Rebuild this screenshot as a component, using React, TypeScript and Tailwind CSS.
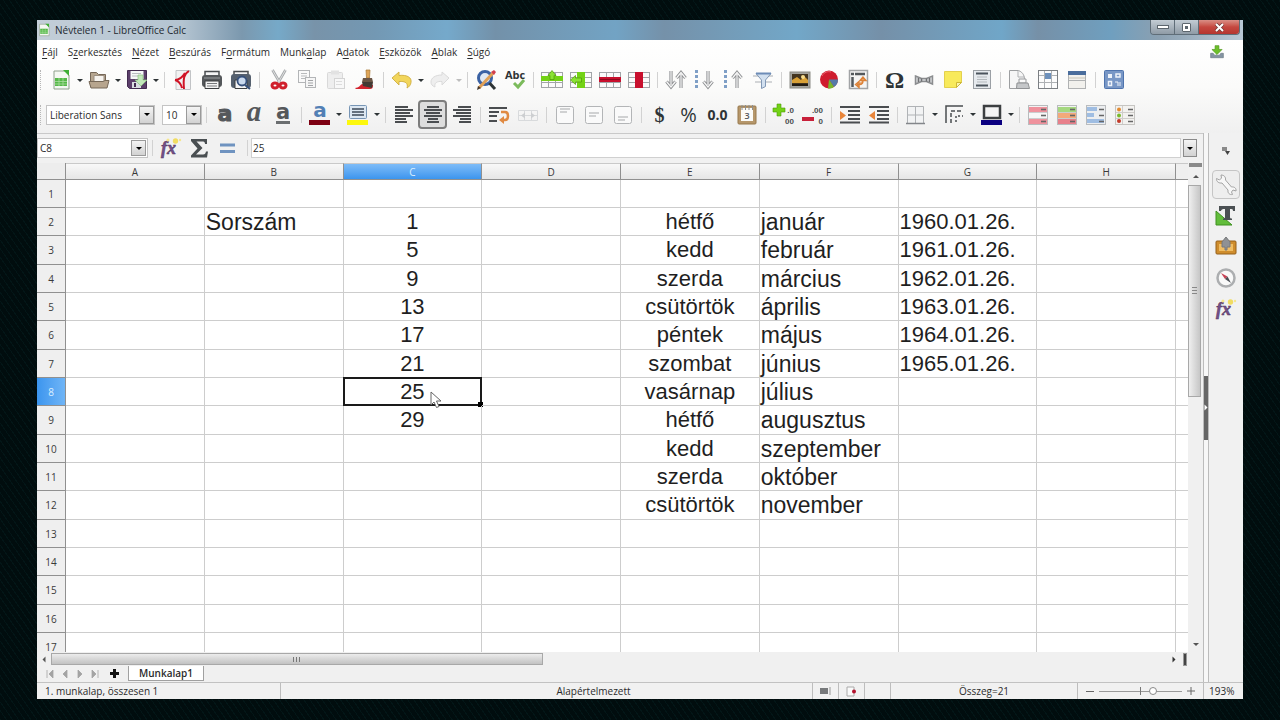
import type { ReactNode } from "react";

type Tool = { name: string; icon: ReactNode; menu?: boolean; active?: boolean; sep?: boolean };

const MENUS: [string, string, string][] = [
  ["", "F", "ájl"],
  ["S", "z", "erkesztés"],
  ["", "N", "ézet"],
  ["", "B", "eszúrás"],
  ["F", "o", "rmátum"],
  ["Munk", "a", "lap"],
  ["A", "d", "atok"],
  ["", "E", "szközök"],
  ["", "A", "blak"],
  ["", "S", "úgó"],
];

const COLUMNS = ["A", "B", "C", "D", "E", "F", "G", "H"];

const COLUMN_STYLE: Record<string, string> = {
  B: "text-[23px]",
  C: "text-[22px] text-center",
  E: "text-[22px] text-center",
  F: "text-[23px]",
  G: "text-[22px]",
};

const CELLS: Record<string, string[]> = {
  B: ["", "Sorszám"],
  C: ["", "1", "5", "9", "13", "17", "21", "25", "29"],
  E: ["", "hétfő", "kedd", "szerda", "csütörtök", "péntek", "szombat", "vasárnap", "hétfő", "kedd", "szerda", "csütörtök"],
  F: ["", "január", "február", "március", "április", "május", "június", "július", "augusztus", "szeptember", "október", "november"],
  G: ["", "1960.01.26.", "1961.01.26.", "1962.01.26.", "1963.01.26.", "1964.01.26.", "1965.01.26."],
};

const ROWS = Array.from({ length: 17 }, (_, i) => i + 1);

function Svg({ children, size = 22 }: { children: ReactNode; size?: number }) {
  return (
    <svg width={size} height={size} viewBox="0 0 22 22" fill="none" aria-hidden="true" className="shrink-0 overflow-visible">
      {children}
    </svg>
  );
}

function SheetDoc({ size }: { size?: number }) {
  return (
    <Svg size={size}>
      <path d="M4 2h11l4 4v14H4z" fill="#f4f8f2" stroke="#8fa08c" />
      <path d="M13 1h6v6z" fill="#3fae35" />
      <rect x="5" y="9" width="12" height="8" fill="#55b848" />
      <path d="M5 12.500h12M5 15h12M9 9v8M13 9v8" stroke="#a9dd9e" strokeWidth="0.800" />
    </Svg>
  );
}

function TableIcon({ kind }: { kind: "rowAdd" | "colAdd" | "rowDel" | "colDel" }) {
  const row = kind === "rowAdd" || kind === "rowDel";
  const color = kind.endsWith("Add") ? "#73d216" : "#c8102e";
  return (
    <Svg>
      <rect x="0.500" y="3.500" width="21" height="15" fill="#fbfbfb" stroke="#a2a5a8" />
      <path d="M1 8.500h20M1 13.500h20M7.500 4v14M14.500 4v14" stroke="#a2a5a8" />
      {row ? <rect x="0" y={kind === "rowAdd" ? 7 : 8} width="22" height="5" fill={color} /> : <rect x="7" y="3" width="8" height="16" fill={color} />}
      {kind === "rowAdd" && <path d="M11 1.500l4 5h-2v4H9v-4H7z" fill="#8ae234" stroke="#4e9a06" strokeWidth="0.700" />}
      {kind === "colAdd" && <path d="M0.500 11l5-4.500v2.500h6v4h-6v2.500z" fill="#8ae234" stroke="#4e9a06" strokeWidth="0.700" />}
      {kind === "rowDel" && <path d="M1 10.500h20" stroke="#8d0a1f" />}
    </Svg>
  );
}

function SortArrow({ x, up }: { x: number; up?: boolean }) {
  const d = up ? "M0 19V5M-4.500 9L0 3.500 4.500 9" : "M0 2v14M-4.500 12.500L0 18l4.500-5.500";
  return (
    <g transform={`translate(${x} 0)`}>
      <path d={d} stroke="#8f9193" strokeWidth="3.200" />
      <path d={d} stroke="#f8f8f8" strokeWidth="1.200" />
    </g>
  );
}

function Dots() {
  return <path d="M2.500 1v19" stroke="#7f9fc6" strokeWidth="3" strokeDasharray="3 2" />;
}

function Lines({ x, widths }: { x: number[]; widths: number[] }) {
  return (
    <>
      {widths.map((w, i) => (
        <rect key={i} x={x[i]} y={2 + i * 3} width={w} height="2" fill="#4a4d50" />
      ))}
    </>
  );
}

function FxIcon() {
  return (
    <Svg>
      <text x="1" y="17" fontFamily="Liberation Serif, serif" fontStyle="italic" fontWeight="700" fontSize="18" fill="#75508a" stroke="#513660" strokeWidth="0.500">
        fx
      </text>
      <circle cx="15.500" cy="4" r="2.700" fill="#f1dc62" />
      <circle cx="8" cy="3" r="1.500" fill="#f5e68d" />
      <circle cx="20" cy="3" r="1.200" fill="#f5e68d" />
    </Svg>
  );
}

function Glyph({ text, className }: { text: string; className: string }) {
  return <span className={`leading-none text-[#2e3436] ${className}`}>{text}</span>;
}

function AlignBox({ y }: { y: number }) {
  return (
    <Svg>
      <rect x="2.500" y="2.500" width="17" height="17" rx="2" fill="#fafafa" stroke="#b3b5b7" />
      <path d={`M6 ${y}h10M6 ${y + 3}h7`} stroke="#a6a8aa" strokeWidth="1.200" />
    </Svg>
  );
}

function DecimalIcon({ add }: { add?: boolean }) {
  return (
    <Svg>
      {add ? <path d="M4 0h4v4h4v4H8v4H4V8H0V4h4z" fill="#73d216" stroke="#4e9a06" strokeWidth="0.600" /> : <rect x="0" y="13" width="12" height="4" fill="#c8203a" />}
      <text x="21" y="9" textAnchor="end" fontFamily="Liberation Sans, sans-serif" fontWeight="700" fontSize="8" fill="#4a4d50">
        {add ? ".0" : ".00"}
      </text>
      <text x="21" y="20" textAnchor="end" fontFamily="Liberation Sans, sans-serif" fontWeight="700" fontSize="8" fill="#4a4d50">
        {add ? "00" : "0"}
      </text>
    </Svg>
  );
}

function IndentIcon({ out }: { out?: boolean }) {
  return (
    <Svg>
      <path d="M1 3h20M9 7h12M9 11h12M9 15h12M1 18.500h20" stroke="#4a4d50" strokeWidth="2" />
      <path d={out ? "M7 7v9l-6-4.500z" : "M1 7v9l6-4.500z"} fill="#e8853a" />
    </Svg>
  );
}

function CondIcon({ colors }: { colors: [string, string, string] }) {
  return (
    <Svg>
      <rect x="1.500" y="1.500" width="19" height="19" fill="#f3f3f3" stroke="#b9bbbd" />
      {colors.map((c, i) => (
        <g key={i}>
          <rect x="2" y={3 + i * 6} width="18" height="5" fill={c} />
          <path d={`M14 ${5.500 + i * 6}h5`} stroke="#666" strokeWidth="1.600" />
        </g>
      ))}
      <path d="M2 8.500h18M2 14.500h18" stroke="#b9bbbd" strokeWidth="0.700" />
    </Svg>
  );
}

const STANDARD: Tool[] = [
  { name: "Új", menu: true, icon: <SheetDoc /> },
  {
    name: "Megnyitás",
    menu: true,
    icon: (
      <Svg>
        <path d="M2.500 18V3.500h6l2 2h7V18z" fill="#b6a690" stroke="#766858" />
        <path d="M6 6.500h10V16H6z" fill="#f6f3ef" stroke="#9c8f80" />
        <path d="M1 12.500h14l2-1h4l-2 7.500H3z" fill="#b7a58e" stroke="#766858" />
      </Svg>
    ),
  },
  {
    name: "Mentés",
    menu: true,
    sep: true,
    icon: (
      <Svg>
        <path d="M1.500 1.500h19v18h-17l-2-2z" fill="#5c3f6b" stroke="#432b50" />
        <rect x="4.500" y="2" width="13" height="8" fill="#f6f7f8" />
        <path d="M6 4.500h9M6 7h6" stroke="#b9bcc0" />
        <rect x="6" y="13" width="9" height="6" fill="#d9dce0" />
        <rect x="8" y="14" width="2" height="4" fill="#432b50" />
        <path d="M12 6h5v5h4l-6 6-6-6h3z" fill="#c2e8ba" stroke="#8cc283" strokeWidth="0.700" />
      </Svg>
    ),
  },
  {
    name: "Exportálás PDF-be",
    icon: (
      <Svg>
        <path d="M4 1.500h14.500v19H4z" fill="#f2f2f2" stroke="#c2c4c6" />
        <path d="M17 2c-5 3-6 7-5 18M3 11c4 0 7-2 10-7M3 11c4 1 6 4 7 8" stroke="#d01426" strokeWidth="2" />
      </Svg>
    ),
  },
  {
    name: "Nyomtatás",
    icon: (
      <Svg>
        <path d="M4 2.500h14V7H4z" fill="#f4f4f4" stroke="#4a4d50" strokeWidth="1.500" />
        <rect x="1" y="6" width="20" height="12" rx="3" fill="#55585b" />
        <path d="M3 9h16" stroke="#9b9ea1" />
        <path d="M4 12h14v7.500H4z" fill="#f4f4f4" stroke="#3c3f41" />
        <path d="M6 14.500h10M6 17h10" stroke="#77797b" />
      </Svg>
    ),
  },
  {
    name: "Nyomtatási kép",
    sep: true,
    icon: (
      <Svg>
        <path d="M4 2.500h14V7H4z" fill="#f4f4f4" stroke="#4a4d50" strokeWidth="1.500" />
        <rect x="1" y="5" width="20" height="14" rx="3" fill="#55606e" />
        <path d="M5 11h12v8.500H5z" fill="#f4f4f4" stroke="#3c3f41" />
        <circle cx="12" cy="12" r="4.500" fill="#c9d9ee" stroke="#36507b" strokeWidth="1.800" />
        <path d="M15 16l5 4" stroke="#36507b" strokeWidth="2" />
      </Svg>
    ),
  },
  {
    name: "Kivágás",
    icon: (
      <Svg>
        <path d="M5.500 1L13 14M18.500 1L11 14" stroke="#a6a9ab" strokeWidth="2.600" />
        <path d="M5.500 1L13 14M18.500 1L11 14" stroke="#ececec" strokeWidth="0.800" />
        <ellipse cx="8" cy="16.500" rx="3" ry="2.600" stroke="#d0202c" strokeWidth="3" />
        <ellipse cx="16" cy="16.500" rx="3" ry="2.600" stroke="#d0202c" strokeWidth="3" />
      </Svg>
    ),
  },
  {
    name: "Másolás",
    icon: (
      <Svg>
        <rect x="2.500" y="1.500" width="11" height="12" fill="#fafafa" stroke="#b3b5b7" />
        <path d="M5 4.500h6M5 7h6M5 9.500h6" stroke="#b9bbbd" />
        <rect x="9.500" y="8.500" width="10" height="10" fill="#f6f6f6" stroke="#b3b5b7" />
        <path d="M12 11.500h5M12 14h5M12 16.500h5" stroke="#a2a4a6" />
      </Svg>
    ),
  },
  {
    name: "Beillesztés",
    icon: (
      <Svg>
        <rect x="2.500" y="3.500" width="15" height="16" rx="1" fill="#eeeeee" stroke="#d9d9d9" />
        <rect x="6" y="1.500" width="8" height="4" fill="#e2e2e2" />
        <rect x="9.500" y="9.500" width="10" height="10" fill="#f8f8f8" stroke="#d4d4d4" />
        <path d="M11 12.500h6M11 15.500h6" stroke="#dcdcdc" />
      </Svg>
    ),
  },
  {
    name: "Formátum másolása",
    sep: true,
    icon: (
      <Svg>
        <path d="M1 19c4 0 5-3 7-4l11 1c0 3-1 4-3 4H2z" fill="#d3242f" />
        <path d="M12 1h4l-.5 8h-3z" fill="#dfa558" stroke="#a87732" strokeWidth="0.700" />
        <path d="M9 9h9l1 4H8z" fill="#6b5646" />
        <path d="M8 13h11l-1 6-9-2z" fill="#433a34" />
      </Svg>
    ),
  },
  {
    name: "Visszavonás",
    menu: true,
    icon: (
      <Svg>
        <path d="M1 9l7-6v3.500c8-1 13 2 12 7-.3 2.500-2 4.500-4 5.500 1.500-5-2-7-8-6.500V16z" fill="#f2d65c" stroke="#cfae3f" strokeWidth="0.900" />
      </Svg>
    ),
  },
  {
    name: "Mégis",
    menu: true,
    sep: true,
    icon: (
      <Svg>
        <path d="M20 9l-7-6v3C6 6 2 9 2 13c0 2 1 4 4 5-1-4 2-6 7-5.500V16z" fill="#eeeeee" stroke="#dadada" />
      </Svg>
    ),
  },
  {
    name: "Keresés és csere",
    icon: (
      <Svg>
        <circle cx="10" cy="9" r="6.500" fill="#dfe8f4" stroke="#3b62a4" strokeWidth="3" />
        <path d="M14.500 14l5.500 6" stroke="#2e3436" strokeWidth="3" />
        <path d="M4 19L18 4" stroke="#e0a056" strokeWidth="3" />
        <path d="M2 21l1-4 3 2z" fill="#45362a" />
        <path d="M16 3l3-2 2 2-2 3z" fill="#d2404e" />
      </Svg>
    ),
  },
  {
    name: "Helyesírás",
    sep: true,
    icon: (
      <Svg>
        <text x="11" y="10" textAnchor="middle" fontFamily="Open Sans, sans-serif" fontWeight="700" fontSize="11" fill="#2e3436">
          Abc
        </text>
        <path d="M10 14l4 4 6-7" stroke="#7cbb5c" strokeWidth="3" />
      </Svg>
    ),
  },
  { name: "Sor beszúrása", icon: <TableIcon kind="rowAdd" /> },
  { name: "Oszlop beszúrása", icon: <TableIcon kind="colAdd" /> },
  { name: "Sor törlése", icon: <TableIcon kind="rowDel" /> },
  { name: "Oszlop törlése", sep: true, icon: <TableIcon kind="colDel" /> },
  { name: "Rendezés", icon: <Svg><SortArrow x={6} /><SortArrow x={16} up /></Svg> },
  { name: "Növekvő rendezés", icon: <Svg><Dots /><SortArrow x={14} /></Svg> },
  { name: "Csökkenő rendezés", icon: <Svg><Dots /><SortArrow x={14} up /></Svg> },
  {
    name: "Automatikus szűrő",
    sep: true,
    icon: (
      <Svg>
        <path d="M1 7h20M3 13h17" stroke="#d3d5d7" strokeWidth="2" />
        <path d="M4 4.500h15l-5.500 6.500v6.500l-4 2V11z" fill="#d2e0ef" stroke="#8298b5" />
        <path d="M4 4.500h15" stroke="#6d8cb7" strokeWidth="2" />
      </Svg>
    ),
  },
  {
    name: "Kép",
    icon: (
      <Svg>
        <rect x="1" y="3" width="20" height="16" fill="#a3a39d" stroke="#8c8c85" />
        <rect x="3" y="5" width="16" height="12" fill="#43351f" />
        <path d="M3 11l5-3 4 3 3-4 4 4v3H3z" fill="#d9a136" />
        <circle cx="14" cy="8" r="2" fill="#f6dc8d" />
        <path d="M3 15h16v2H3z" fill="#221c12" />
      </Svg>
    ),
  },
  {
    name: "Diagram",
    icon: (
      <Svg>
        <circle cx="11" cy="10.500" r="9" fill="#cf1c2e" />
        <path d="M11 10.500h9a9 9 0 0 1-4 7.500z" fill="#567aa9" />
        <path d="M11 10.500l5 7.500a9 9 0 0 1-6 1.500z" fill="#79b92c" />
        <path d="M4 7c2-4 6-5 9-4" stroke="#ea6470" />
      </Svg>
    ),
  },
  {
    name: "Kimutatás",
    sep: true,
    icon: (
      <Svg>
        <rect x="2.500" y="1.500" width="18" height="18" fill="#f5f5f5" stroke="#a2a4a6" strokeWidth="1.500" />
        <path d="M8 5h10M5.500 8v10" stroke="#53585c" strokeWidth="2.500" />
        <path d="M4 5h3" stroke="#53585c" strokeWidth="2.500" />
        <path d="M10 15.500h2.500c3 0 3.500-2 3.500-4M16 8l-3 3.500h6zM8.500 15.500l3.500-3v6z" stroke="#dc8238" strokeWidth="1.400" fill="#e9a873" />
      </Svg>
    ),
  },
  { name: "Különleges karakter", icon: <Glyph text="Ω" className="font-['Liberation_Serif',serif] text-[24px] font-bold" /> },
  {
    name: "Hiperhivatkozás",
    icon: (
      <Svg>
        <path d="M2.500 7l6 2.500h5l6-2.500v8l-6-2.500h-5L2.500 15z" fill="#d5d7d9" stroke="#8b8d8f" strokeWidth="1.500" />
        <path d="M5.500 9v4M8.500 9.500v3M13.500 9.500v3M16.500 9v4" stroke="#6f7173" strokeWidth="1.500" />
      </Svg>
    ),
  },
  {
    name: "Megjegyzés",
    icon: (
      <Svg>
        <path d="M2.500 2.500h17v11l-5 5h-12z" fill="#f8ea5b" stroke="#e3d04e" />
        <path d="M14.500 18.500v-5h5z" fill="#fbf6ac" stroke="#cdb635" />
      </Svg>
    ),
  },
  {
    name: "Élőfej és élőláb",
    sep: true,
    icon: (
      <Svg>
        <rect x="2.500" y="1.500" width="17" height="18" fill="#e6eaee" stroke="#9ba0a5" />
        <path d="M5 4.500h12M5 16.500h12" stroke="#4b545d" strokeWidth="2" />
        <path d="M6 8h10M6 10.500h10M6 13h10" stroke="#b4b9bd" />
      </Svg>
    ),
  },
  {
    name: "Nyomtatási tartomány",
    icon: (
      <Svg>
        <path d="M1.500 1.500h9c5 2 6 6 6 9v9h-15z" fill="#f6f6f6" stroke="#9d9fa1" />
        <path d="M10 2v6h6" stroke="#b0b2b4" />
        <path d="M11 10h7v4h-7z" fill="#fafafa" stroke="#97999b" />
        <path d="M9 14h11l1.500 5.500h-13z" fill="#c5c7c9" stroke="#909294" />
      </Svg>
    ),
  },
  {
    name: "Rögzítés",
    icon: (
      <Svg>
        <rect x="1.500" y="1.500" width="19" height="18" fill="#fcfcfc" stroke="#7b7f83" />
        <path d="M7.500 2v17M14.500 2v17M2 6.500h18M2 13.500h18" stroke="#aeb1b4" />
        <rect x="8" y="4" width="6" height="6" fill="#6e91bc" />
      </Svg>
    ),
  },
  {
    name: "Ablak felosztása",
    sep: true,
    icon: (
      <Svg>
        <rect x="2.500" y="2.500" width="17" height="17" fill="#f2f1ed" stroke="#b0b2b3" />
        <path d="M2 4h18" stroke="#4a6d9c" strokeWidth="4" />
        <path d="M3 8h16v2H3z" fill="#dcdad2" />
        <path d="M2 11.500h18" stroke="#b0b2b3" />
      </Svg>
    ),
  },
  {
    name: "Rajzfunkciók",
    icon: (
      <Svg>
        <rect x="1.500" y="1.500" width="19" height="18" rx="1" fill="#7897c6" stroke="#4f74ad" />
        <rect x="5" y="5" width="4" height="4" fill="#eef3fa" />
        <rect x="13" y="5" width="4" height="3" stroke="#eef3fa" strokeWidth="1.500" />
        <rect x="5.500" y="12.500" width="3" height="4" stroke="#eef3fa" strokeWidth="1.500" />
        <path d="M12 13h3v4M17 13v4" stroke="#eef3fa" />
      </Svg>
    ),
  },
];

const FORMATTING: Tool[] = [
  {
    name: "Félkövér",
    icon: (
      <Svg>
        <text x="11" y="17" textAnchor="middle" fontFamily="DejaVu Sans, sans-serif" fontWeight="700" fontSize="22" fill="#55585b" stroke="#55585b" strokeWidth="1">
          a
        </text>
      </Svg>
    ),
  },
  {
    name: "Dőlt",
    icon: (
      <Svg>
        <text x="11" y="17" textAnchor="middle" fontFamily="Liberation Serif, serif" fontStyle="italic" fontWeight="700" fontSize="29" fill="#55585b">
          a
        </text>
      </Svg>
    ),
  },
  {
    name: "Aláhúzott",
    sep: true,
    icon: (
      <Svg>
        <text x="11" y="15" textAnchor="middle" fontFamily="DejaVu Sans, sans-serif" fontWeight="700" fontSize="21" fill="#55585b">
          a
        </text>
        <path d="M4 18.500h14" stroke="#6b6e70" strokeWidth="3" />
      </Svg>
    ),
  },
  {
    name: "Betűszín",
    menu: true,
    icon: (
      <Svg>
        <text x="11" y="13" textAnchor="middle" fontFamily="DejaVu Sans, sans-serif" fontWeight="700" fontSize="20" fill="#5280b5">
          a
        </text>
        <rect x="0" y="16" width="21" height="5" fill="#7d0012" />
      </Svg>
    ),
  },
  {
    name: "Kiemelés színe",
    menu: true,
    sep: true,
    icon: (
      <Svg>
        <rect x="2.500" y="1.500" width="17" height="13" rx="1" fill="#dce7f2" stroke="#7795b5" />
        <path d="M5 5h12M5 8h12M5 11h12" stroke="#3c4a58" strokeWidth="1.500" />
        <rect x="0" y="16" width="21" height="5" fill="#fdf80d" />
      </Svg>
    ),
  },
  { name: "Balra igazítás", icon: <Svg><Lines x={[2, 2, 2, 2, 2, 2]} widths={[13, 18, 15, 18, 11, 12]} /></Svg> },
  { name: "Középre igazítás", active: true, icon: <Svg><Lines x={[5, 2, 4, 2, 6, 5]} widths={[12, 18, 14, 18, 10, 12]} /></Svg> },
  { name: "Jobbra igazítás", sep: true, icon: <Svg><Lines x={[7, 2, 5, 2, 9, 8]} widths={[13, 18, 15, 18, 11, 12]} /></Svg> },
  {
    name: "Szövegtördelés",
    icon: (
      <Svg>
        <path d="M1 4h18M1 8h10M1 12h8M1 17h8" stroke="#4a4d50" strokeWidth="2" />
        <path d="M13 8h4c2 0 3 1.500 3 4 0 3-1.500 4-3 4h-2" stroke="#e08a42" strokeWidth="2.500" />
        <path d="M16 12v8l-5-4z" fill="#e08a42" />
      </Svg>
    ),
  },
  {
    name: "Cellák egyesítése",
    sep: true,
    icon: (
      <Svg>
        <path d="M1.500 6.500h19v10h-19zM1 11.500h20M7.500 6v10M14.500 6v10" stroke="#d8dadc" />
        <path d="M4 11.500l4-3v6zM18 11.500l-4-3v6z" fill="#cdcfd1" />
      </Svg>
    ),
  },
  { name: "Igazítás felülre", icon: <AlignBox y={5} /> },
  { name: "Függőlegesen középre", icon: <AlignBox y={9} /> },
  { name: "Igazítás alulra", sep: true, icon: <AlignBox y={13} /> },
  { name: "Pénznem", icon: <Glyph text="$" className="font-['Liberation_Serif',serif] text-xl font-bold" /> },
  { name: "Százalék", icon: <Glyph text="%" className="font-['Open_Sans',sans-serif] text-xl" /> },
  { name: "Szám", icon: <Glyph text="0.0" className="font-['Open_Sans',sans-serif] text-sm font-bold" /> },
  {
    name: "Dátum",
    sep: true,
    icon: (
      <Svg>
        <rect x="2" y="2" width="18" height="18" rx="1" fill="#b6976b" stroke="#97794d" />
        <rect x="5" y="4" width="12" height="13" fill="#fbfbf8" />
        <path d="M6 1v5M9.500 1v5M13 1v5M16.500 1v5" stroke="#8c8e90" />
        <text x="11" y="15" textAnchor="middle" fontFamily="Open Sans, sans-serif" fontWeight="600" fontSize="9" fill="#55585b">
          3
        </text>
      </Svg>
    ),
  },
  { name: "Tizedesjegy hozzáadása", icon: <DecimalIcon add /> },
  { name: "Tizedesjegy törlése", sep: true, icon: <DecimalIcon /> },
  { name: "Behúzás növelése", icon: <IndentIcon /> },
  { name: "Behúzás csökkentése", sep: true, icon: <IndentIcon out /> },
  {
    name: "Szegélyek",
    menu: true,
    icon: (
      <Svg>
        <path d="M2.500 2.500h16v17h-16zM10.500 2v18M2 11h17" fill="#f2f3f4" stroke="#b0b3b6" />
        <path d="M1 19.500h19" stroke="#83868a" strokeWidth="1.500" />
      </Svg>
    ),
  },
  {
    name: "Szegélystílus",
    menu: true,
    icon: (
      <Svg>
        <path d="M3 19V2h17" stroke="#4a4d50" strokeWidth="1.500" />
        <path d="M8 19V7h12" stroke="#4a4d50" strokeWidth="1.500" strokeDasharray="4 2" />
        <path d="M13 18v-6h7" stroke="#4a4d50" strokeWidth="1.500" strokeDasharray="2 2" />
      </Svg>
    ),
  },
  {
    name: "Szegélyszín",
    menu: true,
    sep: true,
    icon: (
      <Svg>
        <rect x="3" y="2" width="16" height="12" fill="#f4f4f4" stroke="#3c3f41" strokeWidth="2.500" />
        <rect x="0" y="16" width="21" height="5" fill="#0b0080" />
      </Svg>
    ),
  },
  { name: "Feltételes formázás", icon: <CondIcon colors={["#ef929d", "#f7f7f7", "#ef929d"]} /> },
  { name: "Színskála", icon: <CondIcon colors={["#a5d880", "#f3a97a", "#e8808b"]} /> },
  {
    name: "Adatsáv",
    icon: (
      <Svg>
        <rect x="1.500" y="1.500" width="19" height="19" fill="#eceef0" stroke="#b9bbbd" />
        <rect x="2" y="3" width="10" height="4" fill="#9fbde2" />
        <rect x="2" y="9" width="7" height="4" fill="#9fbde2" />
        <rect x="2" y="15" width="17" height="4" fill="#9fbde2" />
        <path d="M14 5.500h5M14 11.500h5M14 17.500h5" stroke="#666" strokeWidth="1.600" />
      </Svg>
    ),
  },
  {
    name: "Ikonkészlet",
    icon: (
      <Svg>
        <rect x="1.500" y="1.500" width="19" height="19" fill="#f3f2f0" stroke="#c6c5c2" />
        <circle cx="5" cy="5.500" r="2" fill="#e38b31" />
        <circle cx="5" cy="11.500" r="2" fill="#79b92c" />
        <circle cx="5" cy="17" r="2" fill="#c23a2a" />
        <path d="M8.500 2v18M2 8.500h18M2 14.500h18" stroke="#cfcdca" />
        <path d="M14 5.500h5M14 11.500h5M14 17.500h5" stroke="#666" strokeWidth="1.600" />
      </Svg>
    ),
  },
];

function Caret({ className = "border-t-[#3c3f41]" }: { className?: string }) {
  return <span className={`block size-0 border-x-[3px] border-t-[3px] border-x-transparent ${className}`} />;
}

function Separator() {
  return <span className="flex w-2 shrink-0 justify-center"><span className="h-4 w-px bg-[#d2d2d2]" /></span>;
}

function Grip() {
  return <span className="ml-px mr-[5px] h-5 border-l border-dotted border-[#b7b7b7]" />;
}

function Tools({ items }: { items: Tool[] }) {
  return items.map((t) => (
    <div key={t.name} className="flex items-center shrink-0">
      <button
        type="button"
        aria-label={t.name}
        className={`flex h-[29px] w-[29px] items-center justify-center ${t.active ? "rounded-sm border-2 border-[#7d7d7d] bg-[#dddddd]" : ""}`}
      >
        {t.icon}
      </button>
      {t.menu && (
        <button type="button" aria-label={`${t.name} menü`} className="flex h-5 w-[9px] items-center justify-center">
          <Caret className={t.name === "Mégis" ? "border-t-[#bdbdbd]" : "border-t-[#2e3436]"} />
        </button>
      )}
      {t.sep && <Separator />}
    </div>
  ));
}

function Combo({ label, value, className }: { label: string; value: string; className: string }) {
  return (
    <div className={`relative h-5 shrink-0 ${className}`}>
      <select aria-label={label} defaultValue={value} className="block h-5 w-full appearance-none border border-[#c4c4c4] bg-white pl-[3px] text-[10px] leading-4">
        <option>{value}</option>
      </select>
      <span className="pointer-events-none absolute inset-y-px right-px flex w-[15px] items-center justify-center border border-[#9a9a9a] bg-gradient-to-b from-[#f4f4f4] to-[#d2d2d2]">
        <Caret className="border-t-black" />
      </span>
    </div>
  );
}

function TitleBar() {
  return (
    <header className="flex h-5 shrink-0 items-start bg-[linear-gradient(to_right,#c3ced8_0%,#b4c4d1_12%,#7b98ae_17%,#76a9c8_20%,#7893a9_23%,#7398b3_28%,#75a9cb_34%,#7391a9_38%,#72a3c4_48%,#7591a9_52%,#72a7c8_63%,#7590a8_70%,#70a6c8_80%,#7690a7_83%,#6f9fbf_89%,#8ba0b1_93%,#b9c8d5_100%)]">
      <div className="flex flex-1 items-center gap-1 self-center">
        <SheetDoc size={14} />
        <h1 className="text-[10px] font-medium leading-4 text-[#1d2930]">Névtelen 1 - LibreOffice Calc</h1>
      </div>
      <div className="mr-[3px] flex h-[15px] overflow-hidden rounded-b border border-t-0 border-[#5f6d78]">
        <button type="button" aria-label="Kis méret" className="flex w-6 items-center justify-center border-r border-[#5f6d78] bg-gradient-to-b from-[#c3ccd4] to-[#8f9ba6]">
          <span className="h-[4px] w-3 border border-[#5d666e] bg-white" />
        </button>
        <button type="button" aria-label="Előző méret" className="flex w-6 items-center justify-center border-r border-[#5f6d78] bg-gradient-to-b from-[#c3ccd4] to-[#8f9ba6]">
          <span className="flex size-[9px] items-center justify-center rounded-[1px] border border-[#5d666e] bg-white"><span className="size-[3px] bg-[#5d666e]" /></span>
        </button>
        <button type="button" aria-label="Bezárás" className="flex w-10 items-center justify-center bg-gradient-to-b from-[#d88e86] via-[#c5473f] to-[#b53630]">
          <svg width="11" height="9" viewBox="0 0 11 9" aria-hidden="true">
            <path d="M2 1l7 7M9 1L2 8" stroke="#6e3a38" strokeWidth="3.500" />
            <path d="M2 1l7 7M9 1L2 8" stroke="#fff" strokeWidth="2" />
          </svg>
        </button>
      </div>
    </header>
  );
}

function MenuBar() {
  return (
    <nav className="flex h-[23px] shrink-0 items-center gap-[10px] pl-[5px] pr-[19px]">
      {MENUS.map(([before, key, after]) => (
        <button key={before + key + after} type="button" className="text-[10px] leading-4">
          {before}
          <u className="underline-offset-2">{key}</u>
          {after}
        </button>
      ))}
      <button type="button" aria-label="Frissítés érhető el" className="ml-auto">
        <Svg size={14}>
          <path d="M1 13h4l2 3h8l2-3h4v7H1z" fill="#8494a3" stroke="#66737e" />
          <path d="M8 1h6v6h5l-8 8-8-8h5z" fill="#6cbf2b" stroke="#4b9116" />
        </Svg>
      </button>
    </nav>
  );
}

function FormulaBar() {
  return (
    <div className="flex h-[30px] shrink-0 items-center border-t border-[#c9c9c9] bg-[#f1f1f1] pb-px pr-[6px]">
      <div className="flex h-5 w-[111px] shrink-0 border border-[#c4c4c4] bg-white p-px">
        <input aria-label="Név mező" defaultValue="C8" className="w-0 flex-1 pl-px text-[10px]" />
        <button type="button" aria-label="Nevek" className="flex w-[15px] items-center justify-center border border-[#9a9a9a] bg-gradient-to-b from-[#f4f4f4] to-[#d2d2d2]">
          <Caret className="border-t-black" />
        </button>
      </div>
      <Separator />
      <button type="button" aria-label="Függvénytündér" className="flex w-[29px] justify-center"><FxIcon /></button>
      <button type="button" aria-label="Összeg" className="flex w-[29px] justify-center">
        <Svg>
          <path d="M2 2h16v5h-2c0-2-1-2.500-3-2.500H7.500l6 6.500-6.500 6.500h7c2 0 2.500-1 3-3h2l-1 6H2v-2l6.500-7L2 4z" fill="#4a4f52" />
        </Svg>
      </button>
      <button type="button" aria-label="Függvény" className="flex w-[29px] justify-center">
        <Svg><path d="M2 8h15M2 14.500h15" stroke="#6f93c0" strokeWidth="3" /></Svg>
      </button>
      <Separator />
      <input aria-label="Beviteli sor" defaultValue="25" className="h-5 min-w-0 flex-1 border border-[#d0d0d0] bg-white pl-px text-[10px]" />
      <button type="button" aria-label="Beviteli sor kibontása" className="ml-[2px] flex h-[18px] w-[14px] items-center justify-center border border-[#8a8a8a] bg-gradient-to-b from-[#f4f4f4] to-[#d2d2d2]">
        <Caret className="border-t-black" />
      </button>
    </div>
  );
}

function Sheet() {
  return (
    <div className="min-w-0 flex-1 overflow-hidden bg-white">
      <table className="w-full table-fixed border-separate border-spacing-0">
        <colgroup>
          <col className="w-[29px]" />
          {COLUMNS.map((c) => <col key={c} />)}
          <col className="w-3" />
        </colgroup>
        <thead>
          <tr className="h-[17px] text-[10px] leading-[14px] text-[#3a3a3a]">
            <th className="border-b border-r border-[#909090] bg-[#ededed] p-0" />
            {COLUMNS.map((c) => (
              <th
                key={c}
                className={`border-b border-r border-t border-[#909090] border-t-[#c9c9c9] p-0 font-medium ${c === "C" ? "bg-gradient-to-b from-[#7dbcf8] to-[#3b95ee] text-[#dcefff]" : "bg-gradient-to-b from-[#f8f8f8] to-[#e6e6e6]"}`}
              >
                {c}
              </th>
            ))}
            <th className="border-b border-t border-[#909090] border-t-[#c9c9c9] bg-[#efefef] p-0" />
          </tr>
        </thead>
        <tbody>
          {ROWS.map((r) => (
            <tr key={r} className="h-7 nth-[3n]:h-[29px]">
              <th
                className={`border-b border-r border-[#909090] p-0 text-[10px] font-medium leading-4 ${r === 8 ? "bg-gradient-to-r from-[#3b95ee] to-[#6fb5f7] text-[#dcefff]" : "bg-[#efefef] text-[#3a3a3a]"}`}
              >
                {r}
              </th>
              {COLUMNS.map((c) => (
                <td
                  key={c}
                  className={`relative whitespace-nowrap border-b border-r border-[#cdcdcd] px-px py-0 leading-6 text-[#1f1f1f] ${COLUMN_STYLE[c] ?? ""}`}
                >
                  {CELLS[c]?.[r - 1]}
                  {c === "C" && r === 8 && <Selection />}
                </td>
              ))}
              <td className="border-b border-[#cdcdcd] p-0" />
            </tr>
          ))}
        </tbody>
      </table>
    </div>
  );
}

// cell frame, fill handle and the mouse pointer resting on the cell
function Selection() {
  return (
    <span className="pointer-events-none absolute -inset-px border-2 border-[#1a1a1a]">
      <span className="absolute -bottom-[3px] -right-[3px] size-[5px] bg-black" />
      <svg className="absolute left-[85px] top-3" width="12" height="18" viewBox="0 0 12 18" aria-hidden="true">
        <path d="M1 1v13l3-3 2.500 5.500 2.500-1L6.500 10H11z" fill="#fff" stroke="#666" />
      </svg>
    </span>
  );
}

function VerticalScroll() {
  return (
    <div className="flex w-[15px] shrink-0 flex-col items-center bg-[#f0f0f0]">
      <span className="h-1 w-[13px] shrink-0 bg-[#8a8a8a]" />
      <button type="button" aria-label="Görgetés fel" className="flex h-[18px] shrink-0 items-center"><Caret className="rotate-180 border-t-[#555]" /></button>
      <div className="w-full flex-1">
        <div className="flex h-[47%] w-[13px] items-center justify-center border border-[#a8a8a8] bg-gradient-to-r from-[#efefef] to-[#c6c6c6]">
          <span className="h-[7px] w-[5px] border-y border-[#888]"><span className="mt-[2px] block h-px bg-[#888]" /></span>
        </div>
      </div>
      <button type="button" aria-label="Görgetés le" className="flex h-4 shrink-0 items-center"><Caret className="border-t-[#555]" /></button>
    </div>
  );
}

function HorizontalScroll() {
  return (
    <div className="flex h-[14px] shrink-0 items-center bg-[#f0f0f0] pr-4">
      <button type="button" aria-label="Görgetés balra" className="flex w-[14px] justify-center"><Caret className="rotate-90 border-t-[#555]" /></button>
      <div className="h-3 flex-1">
        <div className="flex h-full w-[44%] items-center justify-center border border-[#a8a8a8] bg-gradient-to-b from-[#ececec] to-[#c2c2c2]">
          <span className="h-[5px] w-[7px] border-x border-[#777]"><span className="mx-auto block h-full w-px bg-[#777]" /></span>
        </div>
      </div>
      <button type="button" aria-label="Görgetés jobbra" className="flex w-[10px] justify-center"><Caret className="-rotate-90 border-t-[#333]" /></button>
      <span className="ml-1 h-[13px] w-1 border border-[#999] bg-[#444]" />
    </div>
  );
}

function SheetTabs() {
  const nav: [string, string][] = [
    ["Első munkalap", "M1 0v8M7 0L3 4l4 4z"],
    ["Előző munkalap", "M6 0L2 4l4 4z"],
    ["Következő munkalap", "M2 0l4 4-4 4z"],
    ["Utolsó munkalap", "M7 0v8M1 0l4 4-4 4z"],
  ];
  return (
    <div className="flex h-4 shrink-0 items-start bg-[#f0f0f0] pl-[5px]">
      {nav.map(([label, d]) => (
        <button key={label} type="button" aria-label={label} className="flex h-[15px] w-[15px] items-center justify-center">
          <svg width="8" height="8" viewBox="0 0 8 8" aria-hidden="true"><path d={d} fill="#a3a3a3" stroke="#a3a3a3" strokeWidth="0.800" /></svg>
        </button>
      ))}
      <button type="button" aria-label="Munkalap hozzáadása" className="ml-1 mr-[6px] flex h-[15px] w-4 items-center justify-center">
        <svg width="9" height="9" viewBox="0 0 9 9" aria-hidden="true"><path d="M4.500 0v9M0 4.500h9" stroke="#111" strokeWidth="3" /></svg>
      </button>
      <button type="button" className="h-[15px] border border-t-0 border-[#a0a0a0] bg-white px-[10px] text-[10px] font-semibold leading-[14px]">Munkalap1</button>
    </div>
  );
}

function Sidebar() {
  const panels: { name: string; icon: ReactNode; on?: boolean }[] = [
    {
      name: "Tulajdonságok",
      on: true,
      icon: (
        <Svg>
          <path d="M6 1c3 0 5 2 4.500 5l6 7c3-.5 5 1.500 4.500 4l-3-1-1.500 2 1 2.500c-3 .5-5-1.500-4.500-4.500l-6-7C4 9.500 1 7.500 1.500 4.500l3 1.500L6.500 4z" fill="#f7f7f7" stroke="#a3a3a3" />
        </Svg>
      ),
    },
    {
      name: "Stílusok",
      icon: (
        <Svg>
          <path d="M1 6v14h16z" fill="#62bd3b" stroke="#3f9120" />
          <path d="M4 1h16v5h-2c0-2-1-2-3-2v8c0 1 .5 1.500 2 1.500V15H8v-1.500c1.500 0 2-.5 2-1.500V4C7 4 6.500 4.500 6 6H4z" fill="#4b5053" />
        </Svg>
      ),
    },
    {
      name: "Galéria",
      icon: (
        <Svg>
          <rect x="1" y="5" width="20" height="13" rx="1" fill="#cf8d2d" stroke="#96601a" />
          <path d="M4 8h14v7H4z" fill="#f0bd63" />
          <path d="M11 1l4 5v5h-3v3h-2v-3H7V6z" fill="#8f9194" stroke="#77797c" />
        </Svg>
      ),
    },
    {
      name: "Navigátor",
      icon: (
        <Svg>
          <circle cx="11" cy="11" r="8.500" fill="#f9f9f9" stroke="#acaeb0" strokeWidth="2.500" />
          <path d="M6 6l6.500 3.500L10 12z" fill="#c74356" />
          <path d="M16 16l-6-4 2.500-2.500z" fill="#4b4f55" />
        </Svg>
      ),
    },
    { name: "Függvények", icon: <FxIcon /> },
  ];
  return (
    <aside className="flex w-[35px] shrink-0 flex-col items-center gap-[2px] border-l border-[#bcbcbc] bg-[#f1f1f1]">
      <button type="button" aria-label="Oldalsáv beállításai" className="flex h-[35px] w-full items-center justify-center">
        <svg width="10" height="10" viewBox="0 0 10 10" aria-hidden="true"><path d="M1 1h5v4H1z" fill="#8a8a8a" /><path d="M4 5h5L6.500 9z" fill="#444" /></svg>
      </button>
      {panels.map((p) => (
        <button key={p.name} type="button" aria-label={p.name} className={`flex h-[29px] w-7 items-center justify-center ${p.on ? "rounded-sm border border-[#c5c5c5] bg-[#eeeeee]" : ""}`}>
          {p.icon}
        </button>
      ))}
    </aside>
  );
}

function StatusBar() {
  return (
    <footer className="flex h-[17px] shrink-0 items-stretch border-t border-[#c2c2c2] bg-[#f1f1f1] text-[10px] leading-4">
      <span className="w-[244px] border-r border-[#bdbdbd] pl-2">1. munkalap, összesen 1</span>
      <span className="w-[94px]" />
      <span className="flex-1 border-r border-[#bdbdbd] text-center">Alapértelmezett</span>
      <span className="flex w-[26px] items-center justify-center border-r border-[#bdbdbd]">
        <svg width="11" height="8" viewBox="0 0 11 8" aria-hidden="true"><path d="M0 1h8v6H0z" fill="#77797b" /><path d="M10 0v8" stroke="#999" /></svg>
      </span>
      <span className="flex w-[26px] items-center justify-center border-r border-[#bdbdbd]">
        <svg width="11" height="11" viewBox="0 0 11 11" aria-hidden="true"><path d="M1 1h7v9H1z" fill="#fafafa" stroke="#aaa" /><circle cx="8" cy="5.500" r="2" fill="#b3122d" /></svg>
      </span>
      <span className="w-[26px] border-r border-[#bdbdbd]" />
      <span className="w-[187px] border-r border-[#bdbdbd] text-center">Összeg=21</span>
      <span className="flex w-[126px] items-center gap-[5px] border-r border-[#bdbdbd] px-2">
        <button type="button" aria-label="Kicsinyítés" className="flex w-[8px] justify-center"><span className="h-px w-2 bg-[#666]" /></button>
        <input
          type="range"
          aria-label="Nagyítás"
          min={0}
          max={100}
          defaultValue={66}
          className="h-2 min-w-0 flex-1 appearance-none bg-[linear-gradient(#777,#777),linear-gradient(#999,#999)] bg-[size:1px_8px,100%_1px] bg-center bg-no-repeat [&::-webkit-slider-thumb]:size-2 [&::-webkit-slider-thumb]:appearance-none [&::-webkit-slider-thumb]:rounded-full [&::-webkit-slider-thumb]:border [&::-webkit-slider-thumb]:border-[#888] [&::-webkit-slider-thumb]:bg-white"
        />
        <button type="button" aria-label="Nagyítás növelése" className="flex w-2 justify-center">
          <svg width="8" height="8" viewBox="0 0 8 8" aria-hidden="true"><path d="M4 0v8M0 4h8" stroke="#666" /></svg>
        </button>
      </span>
      <span className="w-[39px] pl-[5px]">193%</span>
    </footer>
  );
}

export default function App() {
  return (
    <div className="flex h-screen flex-col bg-[#010d0e] bg-[repeating-linear-gradient(55deg,#031617_0px,#031617_1px,transparent_1px,transparent_5px)] px-[37px] pb-[21px] pt-5 font-['Open_Sans','Noto_Sans',sans-serif] text-[#2b2b2b]">
      <div className="flex min-h-0 flex-1 flex-col overflow-hidden bg-[#f1f1f1]">
        <TitleBar />
        <div className="shrink-0 bg-gradient-to-b from-white via-[#fbfbfa] to-[#f0f0f0]">
          <MenuBar />
          <div role="toolbar" aria-label="Szokásos" className="flex h-[34px] items-center pl-[2px]">
            <Grip />
            <Tools items={STANDARD} />
          </div>
          <div role="toolbar" aria-label="Formázás" className="flex h-9 items-center pb-px pl-[2px]">
            <Grip />
            <Combo label="Betűtípus" value="Liberation Sans" className="w-[109px]" />
            <Combo label="Betűméret" value="10" className="ml-[7px] w-10" />
            <Separator />
            <Tools items={FORMATTING} />
          </div>
        </div>
        <div className="flex min-h-0 flex-1">
          <div className="flex min-w-0 flex-1 flex-col">
            <FormulaBar />
            <div className="flex min-h-0 flex-1 [&_td]:font-['Liberation_Sans',sans-serif]">
              <Sheet />
              <VerticalScroll />
            </div>
            <HorizontalScroll />
            <SheetTabs />
          </div>
          <button type="button" aria-label="Oldalsáv elrejtése" className="flex w-[5px] shrink-0 items-center border-l border-[#bcbcbc] bg-[#f7f7f7]">
            <span className="flex h-16 w-full items-center justify-center bg-[#666]"><Caret className="-rotate-90 border-t-white" /></span>
          </button>
          <Sidebar />
        </div>
        <StatusBar />
      </div>
    </div>
  );
}
